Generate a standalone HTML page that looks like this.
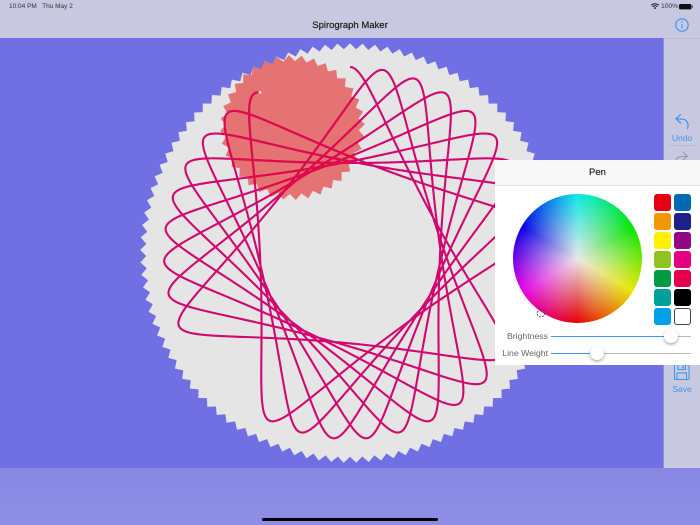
<!DOCTYPE html>
<html><head><meta charset="utf-8">
<style>
html,body{margin:0;padding:0;background:#7070e4}
#a{position:relative;width:700px;height:525px;overflow:hidden;background:#7070e4;font-family:"Liberation Sans",sans-serif}
.t{position:absolute;white-space:nowrap}
svg{position:absolute;left:0;top:0}
.sw{position:absolute;width:17px;height:17px;border-radius:3px}
.lb{position:absolute;width:53px;text-align:right;font-size:8.7px;color:#666;line-height:12px;white-space:nowrap}
.tr{position:absolute;height:1px}
.kn{position:absolute;width:14px;height:14px;border-radius:50%;background:#fff;box-shadow:0 1.5px 3px rgba(0,0,0,.35)}
</style></head>
<body><div id="a">
<div style="position:absolute;left:0;top:468px;width:700px;height:57px;background:linear-gradient(#8787e2,#8e8ee6)"></div>
<svg id="s" width="700" height="525" viewBox="0 0 700 525"></svg>
<div style="position:absolute;left:0;top:0;width:700px;height:38px;background:#c8c8e0"></div>
<div style="position:absolute;left:664px;top:38px;width:36px;height:430px;background:#c8c8e0"></div>
<div style="position:absolute;left:663px;top:38px;width:1px;height:430px;background:#8f8fe4"></div>
<div style="position:absolute;left:664px;top:38px;width:36px;height:1px;background:#bcbcd6"></div>
<div class="t" style="left:9px;top:2px;font-size:6.5px;line-height:10px;color:#333">10:04 PM&nbsp;&nbsp; Thu May 2</div>
<div class="t" style="left:300px;width:100px;text-align:center;top:19px;font-size:9.5px;line-height:13px;color:#222;-webkit-text-stroke:.25px #222">Spirograph Maker</div>
<div class="t" style="left:661px;top:2px;font-size:6.7px;line-height:10px;color:#333">100%</div>
<svg width="700" height="525" viewBox="0 0 700 525">
<path d="M651.2 5.2a6 6 0 0 1 7.6 0M652.6 6.7a3.8 3.8 0 0 1 4.8 0" fill="none" stroke="#222" stroke-width="1.1"/>
<path d="M653.8 8l1.2-1 1.2 1-1.2 1.2z" fill="#222"/>
<rect x="679" y="4" width="12.5" height="5.4" rx="1.2" fill="#111"/><rect x="692" y="5.6" width="1" height="2.2" fill="#555"/>
<circle cx="682" cy="25" r="6.2" fill="none" stroke="#3d94f0" stroke-width="1.2"/>
<rect x="681.5" y="24" width="1.1" height="4.4" fill="#3d94f0"/><rect x="681.4" y="21.4" width="1.3" height="1.3" fill="#3d94f0"/>
<path d="M687.4 128.6c1.6-4.2.2-9-5-9.4l-6.2-.4M680.6 114.6l-4.6 4.2 4.8 4.2" fill="none" stroke="#3d94f0" stroke-width="1.2" stroke-linecap="round"/>
<rect x="668" y="145" width="28" height="1" fill="#bdbdd2"/>
<path d="M676 164c-1.2-3.6.2-7 5-7.3l6.2-.4M682.8 152l4.6 4.2-4.8 4.2" fill="none" stroke="#9a9aa6" stroke-width="1.1" stroke-linecap="round"/>
<path d="M674.5 365v13.5q0 1 1 1h12.500q1 0 1-1v-12l-1.500-1.500M678 365v4.500h7.500v-4.500M677 379v-6h9.500v6" fill="none" stroke="#3d94f0" stroke-width="1"/>
<rect x="682.5" y="365.5" width="1.5" height="3" fill="#3d94f0"/>
</svg>
<div class="t" style="left:664px;width:36px;text-align:center;top:133px;font-size:8.5px;line-height:11px;color:#3d94f0">Undo</div>
<div class="t" style="left:664px;width:36px;text-align:center;top:384px;font-size:8.5px;line-height:11px;color:#3d94f0">Save</div>
<div style="position:absolute;left:262px;top:518px;width:176px;height:3px;border-radius:2px;background:#000"></div>

<div style="position:absolute;left:495px;top:160px;width:205px;height:205px;background:#fff">
<div style="position:absolute;left:0;top:0;width:205px;height:25px;background:#f8f8f8;border-bottom:1px solid #e2e2e2"></div>
<div class="t" style="left:0;width:205px;text-align:center;top:7px;font-size:9.5px;line-height:12px;color:#333;-webkit-text-stroke:.25px #333">Pen</div>
<div style="position:absolute;left:17.5px;top:34px;width:129px;height:129px;border-radius:50%;background:radial-gradient(circle closest-side,rgba(232,232,232,1) 0%,rgba(232,232,232,0) 100%),conic-gradient(#0ee8e8 0deg,#00e600 60deg,#e8e800 120deg,#e60000 180deg,#e600e6 240deg,#0000e6 300deg,#0ee8e8 360deg)"></div>
<svg width="205" height="205" viewBox="0 0 205 205"><circle cx="46" cy="153" r="3.8" fill="none" stroke="#444" stroke-width=".9" stroke-dasharray="2 1"/></svg>
<div class="sw" style="left:158.5px;top:34px;background:#e60012"></div><div class="sw" style="left:179px;top:34px;background:#0068b7"></div>
<div class="sw" style="left:158.5px;top:53px;background:#f39800"></div><div class="sw" style="left:179px;top:53px;background:#1d2088"></div>
<div class="sw" style="left:158.5px;top:72px;background:#fff100"></div><div class="sw" style="left:179px;top:72px;background:#920783"></div>
<div class="sw" style="left:158.5px;top:91px;background:#8fc31f"></div><div class="sw" style="left:179px;top:91px;background:#e4007f"></div>
<div class="sw" style="left:158.5px;top:110px;background:#009944"></div><div class="sw" style="left:179px;top:110px;background:#e5004f"></div>
<div class="sw" style="left:158.5px;top:129px;background:#00a199"></div><div class="sw" style="left:179px;top:129px;background:#000"></div>
<div class="sw" style="left:158.5px;top:148px;background:#00a0e9"></div><div class="sw" style="left:179px;top:148px;width:15px;height:15px;background:#fff;border:1px solid #444"></div>
<div class="lb" style="left:0;top:170px">Brightness</div>
<div class="tr" style="left:56px;top:176px;width:120px;background:#3a94ee"></div><div class="tr" style="left:176px;top:176px;width:20px;background:#b8b8b8"></div>
<div class="kn" style="left:169px;top:169px"></div>
<div class="lb" style="left:0;top:187px">Line Weight</div>
<div class="tr" style="left:56px;top:193px;width:46px;background:#3a94ee"></div><div class="tr" style="left:102px;top:193px;width:94px;background:#b8b8b8"></div>
<div class="kn" style="left:95px;top:186px"></div>
</div>
</div>
<script>
(function(){
var NS="http://www.w3.org/2000/svg",s=document.getElementById("s"),D=Math.PI/180;
function gear(cx,cy,n,rt,rv,a0){var p=[];for(var i=0;i<n;i++){var a=a0+i*360/n,b=a+180/n;
p.push((cx+rt*Math.cos(a*D)).toFixed(2)+","+(cy+rt*Math.sin(a*D)).toFixed(2));
p.push((cx+rv*Math.cos(b*D)).toFixed(2)+","+(cy+rv*Math.sin(b*D)).toFixed(2));}return p.join(" ");}
function el(n,o){var e=document.createElementNS(NS,n);for(var k in o)e.setAttribute(k,o[k]);return e;}
var cx=350,cy=253,C=138,d=48,ratio=23/12,th0=-90,th1=-90+26*360*12/35+6.2,pts=[];
for(var t=th0;t<=th1;t+=1){var f=th0-ratio*(t-th0);
pts.push((cx+C*Math.cos(t*D)+d*Math.cos(f*D)).toFixed(2)+" "+(cy+C*Math.sin(t*D)+d*Math.sin(f*D)).toFixed(2));}
var path="M"+pts.join("L");
var tf=th0-ratio*(th1-th0),gx=cx+C*Math.cos(th1*D),gy=cy+C*Math.sin(th1*D);
var gp=gear(gx,gy,36,72.5,66.5,tf);
s.appendChild(el("polygon",{points:gear(cx,cy,105,209.8,203.8,90+180/105),fill:"#e5e5e5"}));
s.appendChild(el("polygon",{points:gp,fill:"#e57373"}));
s.appendChild(el("path",{d:path,fill:"none",stroke:"#d0086f","stroke-width":"2.1","stroke-linejoin":"round"}));
var defs=el("defs",{}),cp=el("clipPath",{id:"g"});cp.appendChild(el("polygon",{points:gp}));defs.appendChild(cp);s.appendChild(defs);
s.appendChild(el("path",{d:path,fill:"none",stroke:"#de0a4c","stroke-width":"2.1","clip-path":"url(#g)"}));
s.appendChild(el("circle",{cx:gx+d*Math.cos(tf*D),cy:gy+d*Math.sin(tf*D),r:1.3,fill:"#fbe6ee"}));
})();
</script>
</body></html>
